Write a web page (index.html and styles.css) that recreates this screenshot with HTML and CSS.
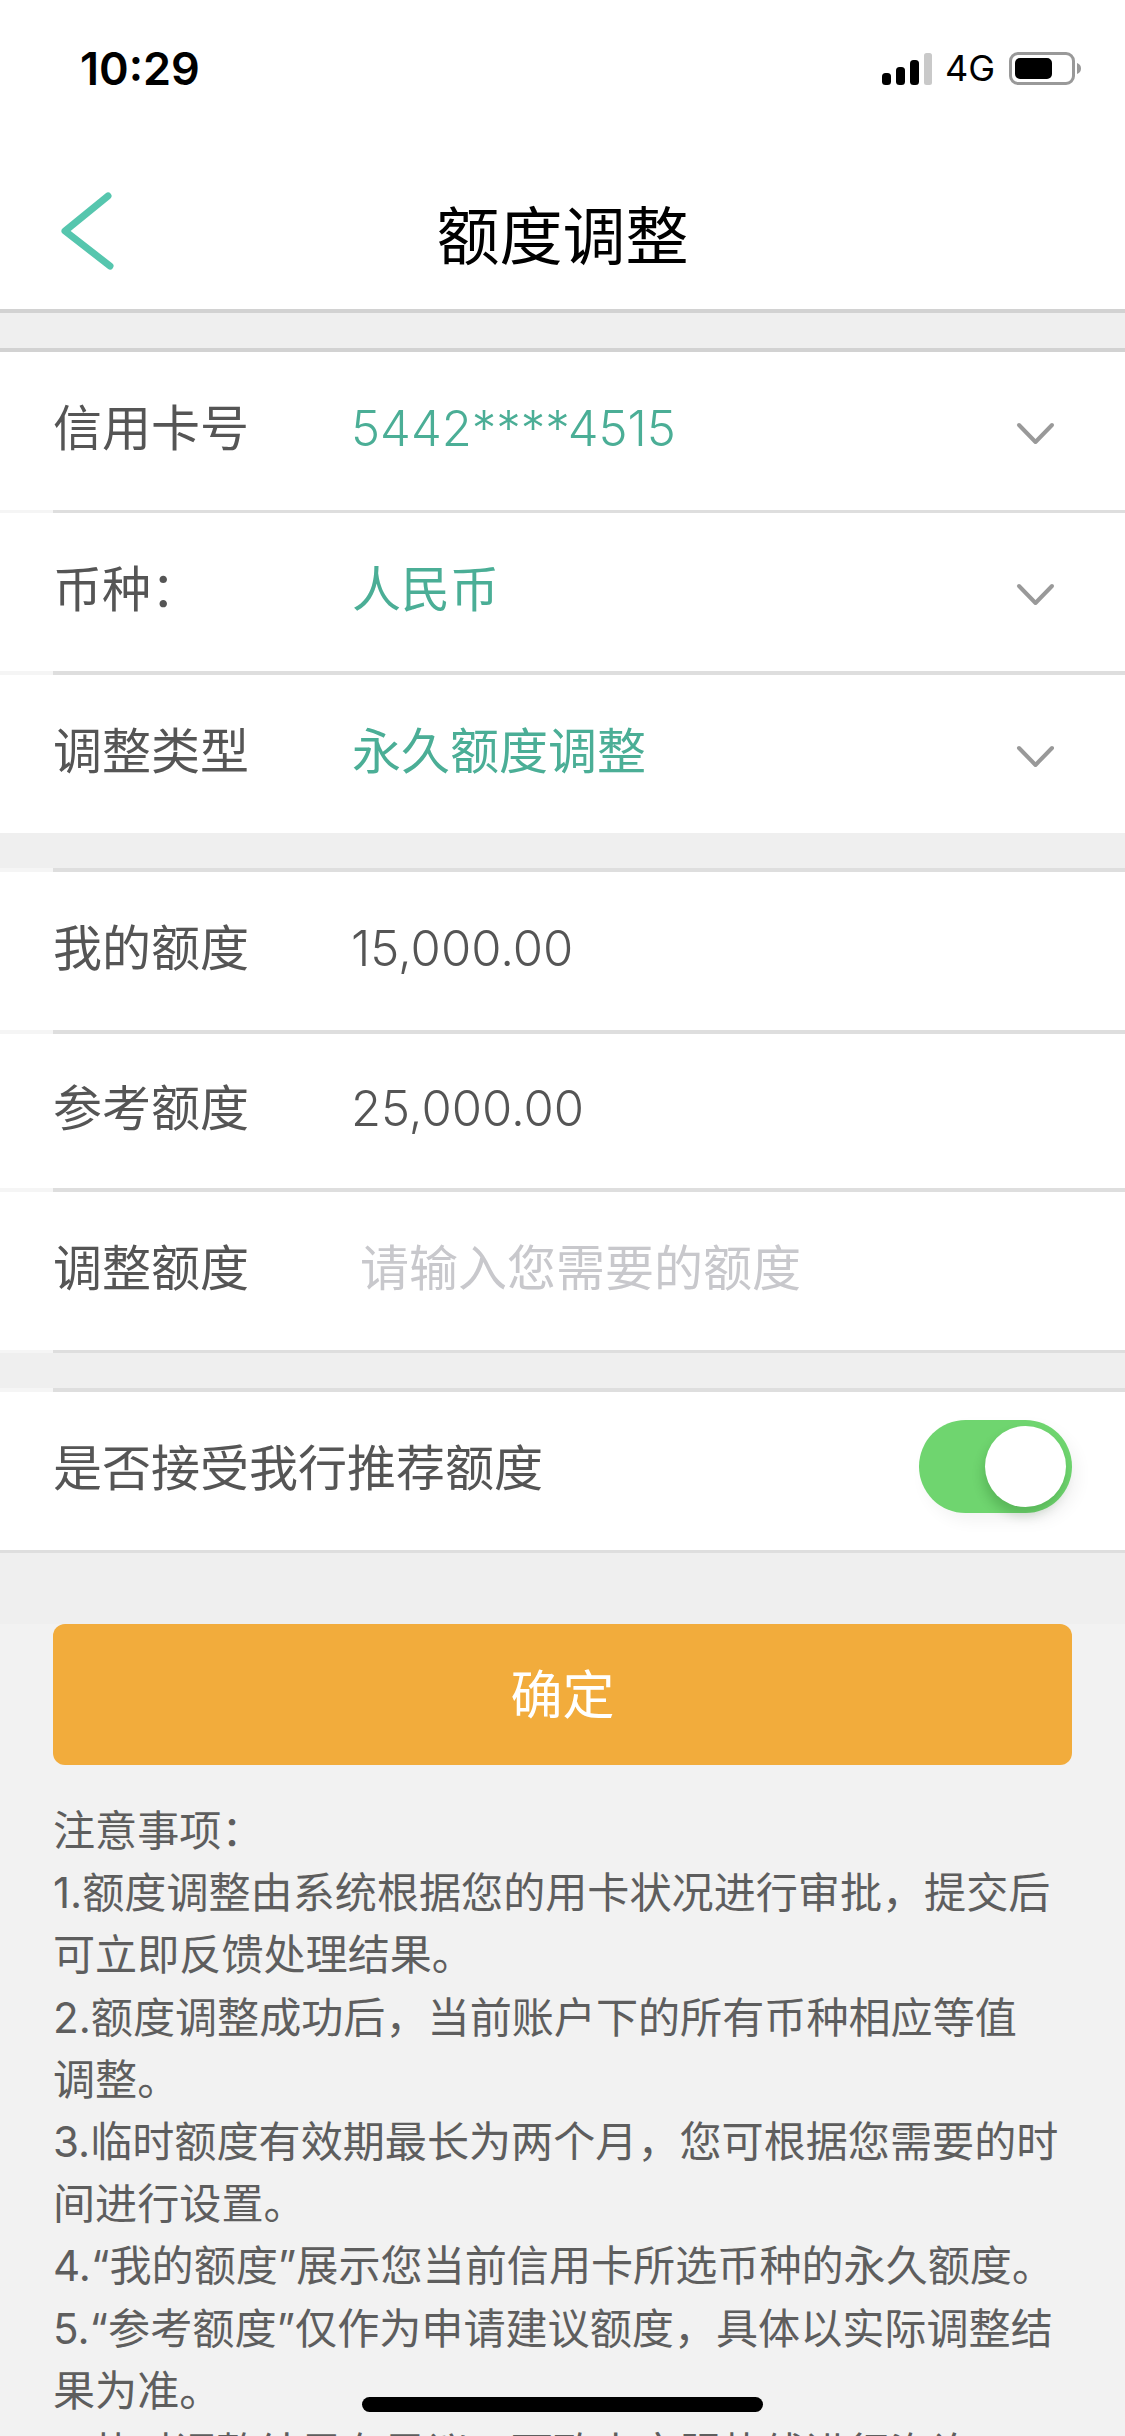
FILE: index.html
```html
<!DOCTYPE html>
<html lang="zh-CN">
<head>
<meta charset="utf-8">
<title>额度调整</title>
<link rel="stylesheet" href="styles.css">
</head>
<body>
<div class="page">
  <header class="top">
    <div class="status">
      <span class="time">10:29</span>
      <div class="status-icons">
        <svg class="signal" width="50" height="32" viewBox="0 0 50 32">
          <rect x="0" y="20" width="9" height="12" rx="3.5" fill="#000"/>
          <rect x="14" y="14" width="9" height="18" rx="3.5" fill="#000"/>
          <rect x="28" y="7" width="9" height="25" rx="3.5" fill="#000"/>
          <rect x="42" y="0" width="8" height="32" rx="2.5" fill="#c9c9c9"/>
        </svg>
        <span class="net">4G</span>
        <svg class="battery" width="73" height="33" viewBox="0 0 73 33">
          <rect x="1.5" y="1.5" width="63" height="30" rx="7.5" fill="none" stroke="#999" stroke-width="3"/>
          <rect x="6" y="6" width="37" height="21" rx="5" fill="#000"/>
          <path d="M68 11 C71 12 72 14 72 16.5 C72 19 71 21 68 22 Z" fill="#999"/>
        </svg>
      </div>
    </div>
    <nav class="nav">
      <svg class="back" width="54" height="80" viewBox="0 0 54 80">
        <path d="M47 5 L4 40 L49 75" fill="none" stroke="#56c6ae" stroke-width="7" stroke-linecap="round" stroke-linejoin="round"/>
      </svg>
      <h1 class="title">额度调整</h1>
    </nav>
  </header>

  <div class="gap"></div>

  <section class="group">
    <div class="rule rule-strong"></div>
    <div class="row">
      <span class="label">信用卡号</span><span class="value num accent">5442****4515</span>
      <svg class="chev" width="39" height="24" viewBox="0 0 39 24"><path d="M3 3 L19.5 20 L36 3" fill="none" stroke="#999" stroke-width="4" stroke-linecap="round" stroke-linejoin="round"/></svg>
    </div>
    <div class="rule rule-thin"></div>
    <div class="row">
      <span class="label">币种：</span><span class="value accent">人民币</span>
      <svg class="chev" width="39" height="24" viewBox="0 0 39 24"><path d="M3 3 L19.5 20 L36 3" fill="none" stroke="#999" stroke-width="4" stroke-linecap="round" stroke-linejoin="round"/></svg>
    </div>
    <div class="rule"></div>
    <div class="row">
      <span class="label">调整类型</span><span class="value accent">永久额度调整</span>
      <svg class="chev" width="39" height="24" viewBox="0 0 39 24"><path d="M3 3 L19.5 20 L36 3" fill="none" stroke="#999" stroke-width="4" stroke-linecap="round" stroke-linejoin="round"/></svg>
    </div>
  </section>

  <div class="gap"></div>

  <section class="group">
    <div class="rule"></div>
    <div class="row">
      <span class="label">我的额度</span><span class="value num">15,000.00</span>
    </div>
    <div class="rule"></div>
    <div class="row row-short">
      <span class="label">参考额度</span><span class="value num">25,000.00</span>
    </div>
    <div class="rule"></div>
    <div class="row">
      <span class="label">调整额度</span><span class="value hint">请输入您需要的额度</span>
    </div>
    <div class="rule rule-thin"></div>
  </section>

  <div class="gap"></div>

  <section class="group">
    <div class="rule"></div>
    <div class="row row-between">
      <span class="label label-wide">是否接受我行推荐额度</span>
      <div class="toggle"><div class="knob"></div></div>
    </div>
    <div class="rule rule-thin rule-full"></div>
  </section>

  <div class="lower">
    <button class="confirm" type="button">确定</button>
    <div class="notes">
      <p>注意事项：</p>
      <p>1.额度调整由系统根据您的用卡状况进行审批，提交后可立即反馈处理结果。</p>
      <p>2.额度调整成功后，当前账户下的所有币种相应等值<span class="keep">调整。</span></p>
      <p>3.临时额度有效期最长为两个月，您可根据您需要的时间进行设置。</p>
      <p>4.“我的额度”展示您当前信用卡所选币种的永久额度。</p>
      <p>5.“参考额度”仅作为申请建议额度，具体以实际调整结果为准。</p>
      <p>6.若对调整结果有异议，可致电客服热线进行咨询。</p>
    </div>
  </div>
  <div class="home-bar"></div>
</div>
</body>
</html>
```
FILE: styles.css
```css
* { box-sizing: border-box; }
html, body { margin: 0; padding: 0; }
body {
  width: 1125px;
  height: 2436px;
  overflow: hidden;
  background: #efefef;
  font-family: Inter, "Noto Sans CJK SC", sans-serif;
  color: #555;
}
.page {
  position: relative;
  width: 1125px;
  height: 2436px;
  overflow: hidden;
  display: flex;
  flex-direction: column;
}
.top {
  background: #fff;
  height: 313px;
  border-bottom: 4px solid #d2d2d2;
  flex: none;
}
.status {
  height: 148px;
  padding: 43px 43px 0 80px;
  display: flex;
  justify-content: space-between;
  align-items: flex-start;
}
.time {
  font-size: 45px;
  line-height: 52px;
  font-weight: 600;
  color: #000;
}
.status-icons {
  display: flex;
  align-items: center;
  margin-top: 9px;
}
.net {
  font-size: 36px;
  line-height: 33px;
  margin: 0 14px 0 13px;
  color: #000;
  font-weight: 400;
}
.nav {
  position: relative;
  height: 161px;
  display: flex;
  align-items: center;
  justify-content: center;
  padding-top: 14px;
}
.back {
  position: absolute;
  left: 61px;
  top: 43px;
}
.title {
  margin: 0;
  font-size: 63px;
  line-height: 80px;
  font-weight: 400;
  color: #000;
}
.gap { height: 35px; flex: none; background: #efefef; }
.group { background: #fff; flex: none; }
.rule {
  height: 4px;
  background: #f5f5f5;
}
.rule-thin { height: 3px; }
.rule::after {
  content: "";
  display: block;
  height: 100%;
  margin-left: 53px;
  background: #dedede;
}
.rule-strong::after { margin-left: 0; background: #d2d2d2; }
.rule-full::after { margin-left: 0; }
.row {
  height: 158px;
  padding: 0 53px 4px;
  display: flex;
  align-items: center;
}
.row-short { height: 154px; }
.row-between { justify-content: space-between; }
.label {
  width: 299px;
  flex: none;
  font-size: 49px;
  line-height: 60px;
  color: #555;
}
.label-wide { width: auto; }
.value {
  flex: 1;
  font-size: 49px;
  line-height: 60px;
  color: #555;
}
.num {
  font-size: 49px;
  font-weight: 300;
  margin-left: -1px;
}
.accent { color: #4bae96; }
.hint { color: #c8c8cc; padding-left: 8px; }
.chev { flex: none; margin: 10px 17px 0 1px; }
.toggle {
  width: 153px;
  height: 93px;
  margin-top: -5px;
  border-radius: 47px;
  background: #6fd56f;
  padding-right: 6px;
  display: flex;
  align-items: center;
  justify-content: flex-end;
  box-shadow: 6px 8px 16px rgba(0, 0, 0, 0.05);
}
.knob {
  width: 81px;
  height: 81px;
  border-radius: 50%;
  background: #fff;
  box-shadow: -2px 8px 12px rgba(0, 60, 0, 0.2);
}
.lower {
  flex: 1;
  margin-top: 71px;
  background: #f2f2f2;
  padding: 0 53px;
}
.confirm {
  display: block;
  width: 100%;
  height: 141px;
  border: 0;
  border-radius: 12px;
  padding: 0 0 6px;
  background: #f2ac3c;
  color: #fff;
  font-family: inherit;
  font-size: 52px;
}
.notes {
  margin-top: 35px;
  font-size: 42.1px;
  line-height: 62.2px;
  color: #5e5e5e;
}
.notes p { margin: 0; }
.keep { white-space: nowrap; }
.home-bar {
  position: absolute;
  left: 362px;
  top: 2397px;
  width: 401px;
  height: 15px;
  border-radius: 8px;
  background: #000;
}
```
